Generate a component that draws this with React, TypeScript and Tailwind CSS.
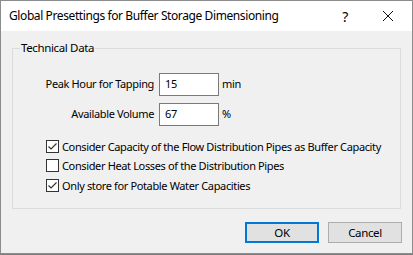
import React from "react";

const font = { fontFamily: '"Segoe UI", "Noto Sans", "Liberation Sans", sans-serif' };

function Check({ checked }: { checked: boolean }) {
  return (
    <span className="w-[13px] h-[13px] border border-[#333333] bg-white flex items-center justify-center shrink-0">
      {checked && (
        <svg width="11" height="11" viewBox="0 0 11 11">
          <path d="M1.5 5.5 L4 8 L9.5 2.5" fill="none" stroke="#333333" strokeWidth="1.2" />
        </svg>
      )}
    </span>
  );
}

function CheckRow({ checked, label, h }: { checked: boolean; label: string; h: string }) {
  return (
    <div className={`flex items-center gap-[3px] pl-[33px] ${h}`}>
      <Check checked={checked} />
      <span className="leading-none whitespace-nowrap">{label}</span>
    </div>
  );
}

function Field({ label, value, unit }: { label: string; value: string; unit: string }) {
  return (
    <div className="flex items-center h-[23px]">
      <span className="w-[141px] text-right whitespace-nowrap">{label}</span>
      <div className="ml-[5px] w-[60px] h-[23px] border border-[#7a7a7a] bg-white flex items-center pl-[5px]">{value}</div>
      <span className="ml-[3px]">{unit}</span>
    </div>
  );
}

export default function App() {
  return (
    <div className="w-[413px] h-[255px] bg-[#7d7d7d]" style={font}>
      <div className="w-[413px] h-[254px] border border-[#8c8c8c] bg-[#f0f0f0] flex flex-col text-[11px] tracking-[-0.36px] text-black">
        <div className="h-[30px] bg-white flex items-center shrink-0">
          <span className="ml-[8px] text-[12px] tracking-[-0.4px]">Global Presettings for Buffer Storage Dimensioning</span>
          <span className="ml-auto w-[20px] text-center text-[14px] mr-[27px]">?</span>
          <svg width="12" height="12" viewBox="0 0 12 12" className="mr-[18px]">
            <path d="M1 1 L11 11 M11 1 L1 11" stroke="#111" strokeWidth="1" fill="none" />
          </svg>
        </div>
        <fieldset className="mt-[9px] ml-[11px] w-[389px] h-[169px] border border-[#dcdcdc] p-0 m-0">
          <legend className="ml-[7px] px-[1px] leading-[16px] text-[11.5px]">Technical Data</legend>
          <div className="mt-[17px] flex flex-col gap-[7px]">
            <Field label="Peak Hour for Tapping" value="15" unit="min" />
            <Field label="Available Volume" value="67" unit="%" />
          </div>
          <div className="mt-[10px] flex flex-col">
            <CheckRow checked label="Consider Capacity of the Flow Distribution Pipes as Buffer Capacity" h="h-[20px]" />
            <CheckRow checked={false} label="Consider Heat Losses of the Distribution Pipes" h="h-[19px]" />
            <CheckRow checked label="Only store for Potable Water Capacities" h="h-[20px]" />
          </div>
        </fieldset>
        <div className="flex justify-end gap-[9px] mt-[13px] pr-[10px]">
          <button className="w-[74px] h-[21px] border-2 border-[#0078d7] bg-[#e1e1e1] flex items-center justify-center text-[11.5px]">OK</button>
          <button className="w-[74px] h-[21px] border border-[#adadad] bg-[#e1e1e1] flex items-center justify-center text-[11.5px]">Cancel</button>
        </div>
      </div>
    </div>
  );
}
